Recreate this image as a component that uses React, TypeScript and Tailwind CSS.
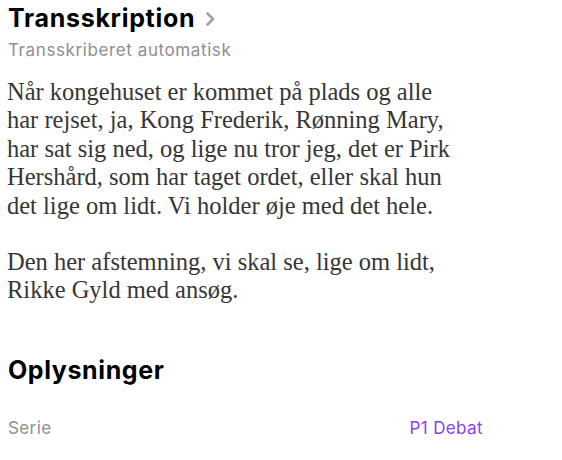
export default function App() {
  return (
    <div className="w-[562px] h-[460px] bg-white overflow-hidden" style={{ fontFamily: 'Inter, "Liberation Sans", Arial, sans-serif' }}>
      <div className="pl-[8px] pt-[3px]">
        <div className="flex items-center gap-[9px] h-[30px]">
          <span className="text-[25px] font-bold text-black leading-[30px] tracking-[0.7px]">Transskription</span>
          <svg width="12" height="18" viewBox="0 0 12 18" className="mt-[1px]">
            <path d="M3.5 3.5 L9 9 L3.5 14.5" fill="none" stroke="#a0a0a5" strokeWidth="2.6" strokeLinecap="round" strokeLinejoin="round" />
          </svg>
        </div>
        <div className="text-[17px] leading-[20px] tracking-[0.6px] text-[#8e8e93] mt-[7px]">Transskriberet automatisk</div>
        <div className="-ml-[1px] mt-[18px] text-[24.5px] leading-[28.4px] text-[#363636]" style={{ fontFamily: '"Liberation Serif", "Times New Roman", serif' }}>
          <p>Når kongehuset er kommet på plads og alle<br />har rejset, ja, Kong Frederik, Rønning Mary,<br />har sat sig ned, og lige nu tror jeg, det er Pirk<br />Hershård, som har taget ordet, eller skal hun<br />det lige om lidt. Vi holder øje med det hele.</p>
          <p className="mt-[28px]">Den her afstemning, vi skal se, lige om lidt,<br />Rikke Gyld med ansøg.</p>
        </div>
        <div className="mt-[50px] text-[25px] font-bold text-black leading-[30px] tracking-[0.6px]">Oplysninger</div>
        <div className="mt-[33px] flex text-[17px] leading-[20px] tracking-[0.4px] w-[475px]">
          <span className="text-[#8e8e93]">Serie</span>
          <span className="ml-auto text-[#8a3ff3]">P1 Debat</span>
        </div>
      </div>
    </div>
  );
}
